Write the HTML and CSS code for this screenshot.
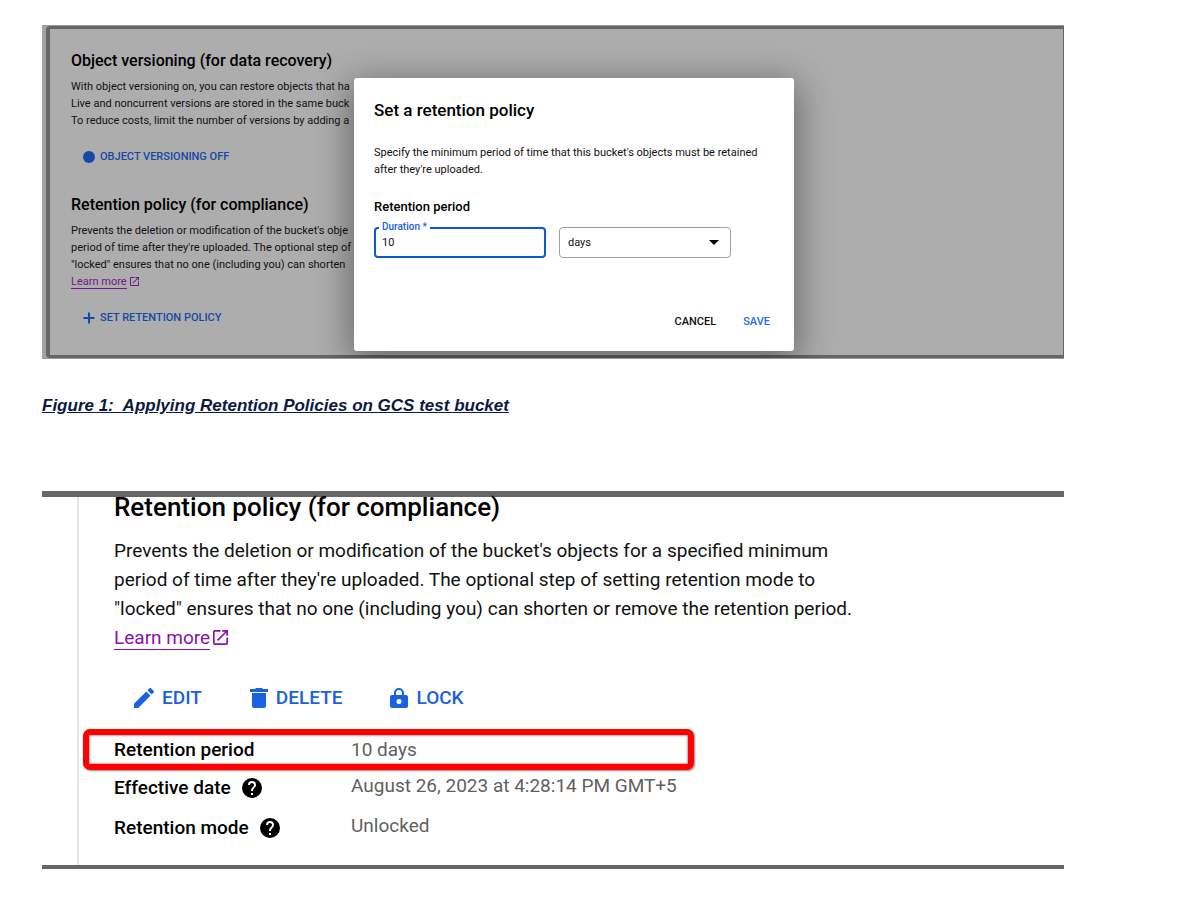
FILE: index.html
```
<!DOCTYPE html>
<html lang="en">
<head>
    <meta charset="utf-8">
    <title>Retention Policies</title>
    <link rel="stylesheet" href="styles.css">
</head>
<body>
    <div class="bucket-shot">
        <div class="bucket-page">
            <h2>Object versioning (for data recovery)</h2>
            <p>With object versioning on, you can restore objects that ha<br>
                Live and noncurrent versions are stored in the same buck<br>
                To reduce costs, limit the number of versions by adding a</p>
            <button type="button" class="link-btn versioning">
                <svg viewBox="0 0 12 12" width="12" height="12"><circle cx="6" cy="6" r="6" /></svg>
                OBJECT VERSIONING OFF
            </button>
            <h2>Retention policy (for compliance)</h2>
            <p>Prevents the deletion or modification of the bucket's obje<br>
                period of time after they're uploaded. The optional step of<br>
                "locked" ensures that no one (including you) can shorten<br>
                <a href="#" class="learn"><span>Learn more</span><svg viewBox="3 3 18 18" width="9" height="9"><path d="M19 19H5V5h7V3H5a2 2 0 0 0-2 2v14a2 2 0 0 0 2 2h14c1.1 0 2-.9 2-2v-7h-2v7zM14 3v2h3.590l-9.830 9.830 1.410 1.410L19 6.410V10h2V3h-7z" /></svg></a></p>
            <button type="button" class="link-btn">
                <svg viewBox="0 0 12 12" width="12" height="12"><path d="M5 0.500h2V5h4.500v2H7v4.500H5V7H0.500V5H5z" /></svg>
                SET RETENTION POLICY
            </button>
        </div>

        <form class="dialog">
            <h2>Set a retention policy</h2>
            <p>Specify the minimum period of time that this bucket's objects must be retained after they're uploaded.</p>
            <h3>Retention period</h3>
            <div class="fields">
                <div class="field">
                    <label for="duration">Duration *</label>
                    <input type="text" id="duration" value="10">
                </div>
                <div class="field">
                    <select id="unit" aria-label="Unit">
                        <option>days</option>
                    </select>
                    <svg class="caret" viewBox="0 0 10 5" width="10" height="5"><path d="M0 0h10L5 5z" /></svg>
                </div>
            </div>
            <div class="actions">
                <button type="button">CANCEL</button>
                <button type="button" class="save">SAVE</button>
            </div>
        </form>
    </div>

    <p class="caption">Figure 1:&nbsp; Applying Retention Policies on GCS test bucket</p>

    <div class="policy-shot">
        <div class="policy">
            <h2>Retention policy (for compliance)</h2>
            <p>Prevents the deletion or modification of the bucket's objects for a specified minimum<br>
                period of time after they're uploaded. The optional step of setting retention mode to<br>
                "locked" ensures that no one (including you) can shorten or remove the retention period.<br>
                <a href="#" class="learn"><span>Learn more</span><svg viewBox="3 3 18 18" width="15" height="15"><path d="M19 19H5V5h7V3H5a2 2 0 0 0-2 2v14a2 2 0 0 0 2 2h14c1.1 0 2-.9 2-2v-7h-2v7zM14 3v2h3.590l-9.830 9.830 1.410 1.410L19 6.410V10h2V3h-7z" /></svg></a></p>
            <div class="tools">
                <button type="button">
                    <svg viewBox="3 3 18 18" width="20" height="20"><path d="M3 17.250V21h3.750L17.810 9.940l-3.750-3.750L3 17.250zM20.710 7.040a1 1 0 0 0 0-1.410l-2.340-2.340a1 1 0 0 0-1.410 0l-1.830 1.830 3.750 3.750 1.830-1.830z" /></svg>
                    EDIT
                </button>
                <button type="button">
                    <svg viewBox="0 0 18 20" width="18" height="20"><path d="M2 5h14v13a2 2 0 0 1-2 2H4a2 2 0 0 1-2-2zM0 1h5l1-1h6l1 1h5v3H0z" /></svg>
                    DELETE
                </button>
                <button type="button">
                    <svg viewBox="0 0 18 20" width="18" height="20"><path fill-rule="evenodd" d="M2 7h2V5a5 5 0 0 1 10 0v2h2a2 2 0 0 1 2 2v9a2 2 0 0 1-2 2H2a2 2 0 0 1-2-2V9a2 2 0 0 1 2-2zm4 0h6V5a3 3 0 0 0-6 0zm3 4a2.500 2.500 0 1 0 0 5 2.500 2.500 0 0 0 0-5z" /></svg>
                    LOCK
                </button>
            </div>
            <table>
                <tr class="marked">
                    <th>Retention period</th>
                    <td>10 days</td>
                </tr>
                <tr class="date">
                    <th>Effective date <svg class="help" viewBox="2 2 20 20" width="20" height="20"><path d="M12 2a10 10 0 1 0 0 20 10 10 0 0 0 0-20zm1 17h-2v-2h2v2zm2.070-7.750l-.9.920C13.450 12.900 13 13.500 13 15h-2v-.5c0-1.100.45-2.100 1.170-2.830l1.240-1.260A2 2 0 1 0 10 9H8a4 4 0 0 1 8 0c0 .88-.36 1.680-.93 2.250z" /></svg></th>
                    <td>August 26, 2023 at 4:28:14 PM GMT+5</td>
                </tr>
                <tr class="mode">
                    <th>Retention mode <svg class="help" viewBox="2 2 20 20" width="20" height="20"><path d="M12 2a10 10 0 1 0 0 20 10 10 0 0 0 0-20zm1 17h-2v-2h2v2zm2.070-7.750l-.9.920C13.450 12.900 13 13.500 13 15h-2v-.5c0-1.100.45-2.100 1.170-2.830l1.240-1.260A2 2 0 1 0 10 9H8a4 4 0 0 1 8 0c0 .88-.36 1.680-.93 2.250z" /></svg></th>
                    <td>Unlocked</td>
                </tr>
            </table>
        </div>
    </div>
</body>
</html>
```

FILE: styles.css
```
* {
    box-sizing: border-box;
}
body {
    margin: 0;
    padding: 25px 136px 32px 42px;
    background-color: #fff;
    color: #111;
    font-family: Roboto, "Liberation Sans", sans-serif;
}
h2, h3, p {
    margin: 0;
}
h2, h3, th {
    color: #000;
    font-weight: 500;
}
button {
    padding: 0;
    border: none;
    background: none;
    color: #1a61e0;
    font-family: inherit;
    font-weight: 500;
    cursor: pointer;
}
svg {
    fill: currentColor;
}

/* bucket page dimmed behind the dialog */
.bucket-shot {
    position: relative;
    overflow: hidden;
    padding-left: 4px;
    border-top: 1px solid #999;
    border-bottom: 1px solid #999;
    background-color: #a3a3a3;
}
.bucket-page {
    padding: 21px 20px 29px 21px;
    border: 3px solid #666;
    border-left-width: 4px;
    border-right-width: 1px;
    border-radius: 4px 0 0 4px;
    background-color: #adadad;
    white-space: nowrap;
}
.bucket-page h2 {
    font-size: 16px;
    line-height: 22px;
}
.bucket-page p {
    margin-top: 6px;
    font-size: 11px;
    line-height: 17px;
}
.link-btn {
    display: flex;
    align-items: center;
    gap: 5px;
    margin: 19px 0 0 12px;
    color: #1549a6;
    font-size: 11px;
    line-height: 17px;
}
.versioning {
    margin-bottom: 29px;
}
.learn {
    color: #8a11a8;
    text-decoration: none;
}
.learn span {
    border-bottom: 1px solid;
}
.learn svg {
    margin-left: 3px;
    vertical-align: -1px;
}
.bucket-page .learn {
    color: #6f1a85;
}

.dialog {
    position: absolute;
    top: 52px;
    left: 312px;
    width: 440px;
    padding: 20px;
    border-radius: 3px;
    background-color: #fff;
    box-shadow: 0 8px 36px 4px rgba(0, 0, 0, 0.4);
}
.dialog h2 {
    font-size: 17px;
    line-height: 24px;
}
.dialog p {
    margin-top: 22px;
    font-size: 11px;
    line-height: 17px;
}
.dialog h3 {
    margin-top: 20px;
    font-size: 13px;
    line-height: 18px;
}
.fields {
    display: flex;
    gap: 13px;
    margin-top: 11px;
}
.field {
    position: relative;
    width: 172px;
}
.field label {
    position: absolute;
    top: -6px;
    left: 5px;
    padding: 0 3px;
    background-color: #fff;
    color: #1a61e0;
    font-size: 10px;
    font-weight: 500;
    line-height: 12px;
}
.field input, .field select {
    display: block;
    width: 100%;
    height: 31px;
    padding: 0 8px;
    border: 1px solid #9aa0a6;
    border-radius: 4px;
    background-color: #fff;
    color: #111;
    font-family: inherit;
    font-size: 11px;
    appearance: none;
}
.field input {
    padding: 0 6px;
    border: 2px solid #1056d8;
}
.caret {
    position: absolute;
    top: 13px;
    right: 12px;
    fill: #000;
}
.actions {
    display: flex;
    justify-content: flex-end;
    gap: 27px;
    margin-top: 55px;
    padding-right: 4px;
}
.actions button {
    color: #111;
    font-size: 11px;
    line-height: 18px;
}
.actions .save {
    color: #2b6af0;
}

.caption {
    margin: 37px 0 75px;
    color: #0b1a42;
    font-family: "Liberation Sans", Arial, sans-serif;
    font-size: 17px;
    font-weight: bold;
    font-style: italic;
    line-height: 20px;
    text-decoration: underline;
}

/* policy details */
.policy-shot {
    padding-left: 35px;
    border-top: 6px solid #666;
    border-bottom: 4px solid #666;
}
.policy {
    padding: 0 0 15px 35px;
    border-left: 2px solid #e4e4e4;
}
.policy h2 {
    font-size: 26px;
    line-height: 20px;
}
.policy p {
    margin-top: 19px;
    font-size: 19px;
    line-height: 29px;
}
.tools {
    display: flex;
    gap: 48px;
    margin: 32px 0 17px 20px;
}
.tools button {
    display: flex;
    align-items: center;
    gap: 8px;
    font-size: 19px;
    line-height: 28px;
}
table {
    margin-left: -31px;
    border-collapse: collapse;
    font-size: 19px;
    line-height: 24px;
}
th, td {
    height: 41px;
    padding: 0;
    text-align: left;
}
th {
    width: 268px;
    padding-left: 31px;
}
td {
    width: 343px;
    padding-bottom: 5px;
    color: #5f5f5f;
}
.marked {
    border-radius: 7px;
    box-shadow: inset 0 0 0 6px #f00, inset 0 0 2px 7px #aaa, 1px 1px 2px #888;
}
.marked td {
    padding-bottom: 0;
}
.date th, .date td {
    height: 36px;
}
.mode th, .mode td {
    height: 44px;
}
.help {
    margin-left: 7px;
    vertical-align: -4px;
}
```
